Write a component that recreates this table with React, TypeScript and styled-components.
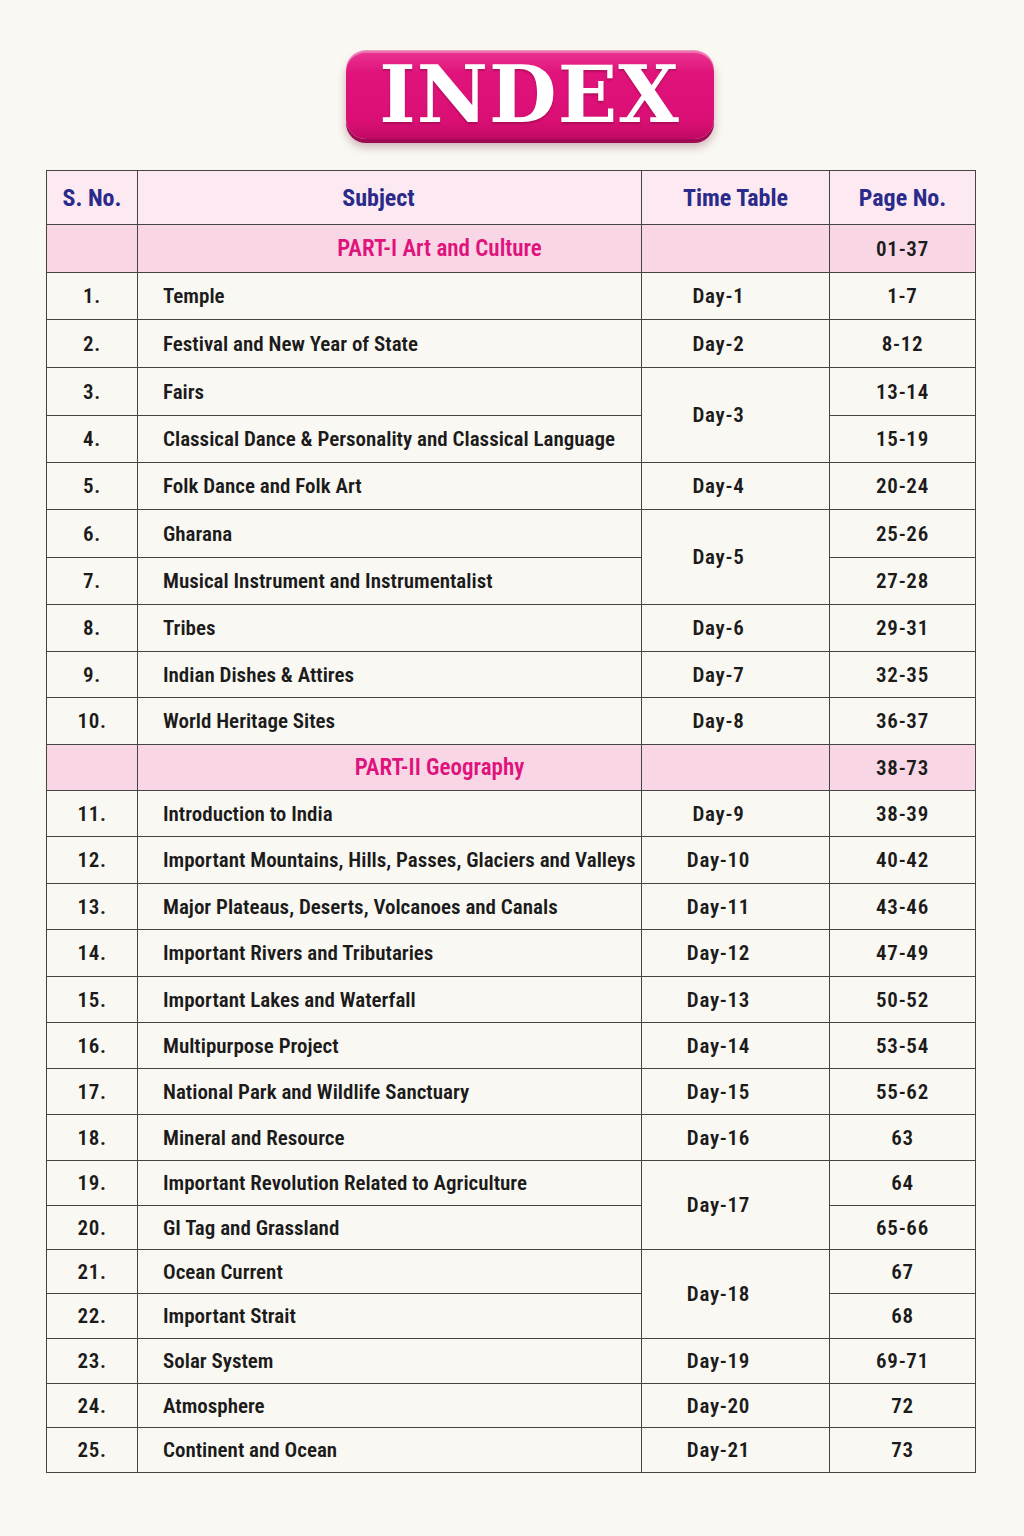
import React from "react";
import styled, { createGlobalStyle } from "styled-components";

const Global = createGlobalStyle`
  html, body { margin: 0; padding: 0; background: #faf8f2; }
  body { font-family: "Roboto Condensed", Roboto, "DejaVu Sans Condensed", sans-serif; font-stretch: 75%; }
`;

const Page = styled.div`
  width: 1024px;
  height: 1536px;
  background: #faf8f2;
  display: flex;
  flex-direction: column;
  align-items: stretch;
  box-sizing: border-box;
  padding: 50px 49px 0 46px;
`;

const BannerWrap = styled.div`
  display: flex;
  justify-content: center;
  padding-left: 38px;
  margin-bottom: 31px;
`;

const Banner = styled.div`
  width: 368px;
  height: 89px;
  box-sizing: border-box;
  border-radius: 20px;
  border-top: 1px solid rgba(255, 255, 255, 0.6);
  background: linear-gradient(180deg, #ea3590 0%, #e0137b 25%, #da0f74 80%, #c00a63 100%);
  box-shadow: 0 4px 0 #a10a52, 0 8px 10px rgba(90, 20, 50, 0.3), inset 0 2px 0 rgba(255, 255, 255, 0.3);
  display: flex;
  align-items: center;
  justify-content: center;
`;

const BannerText = styled.h1`
  margin: 0;
  font-family: "DejaVu Serif", "Liberation Serif", serif;
  font-stretch: 100%;
  font-weight: 700;
  font-size: 78px;
  line-height: 1;
  color: #ffffff;
  letter-spacing: 1px;
  text-shadow: 0 2px 2px rgba(100, 0, 40, 0.35);
`;

const Table = styled.table`
  width: 929px;
  border-collapse: collapse;
  table-layout: fixed;
  border: 1px solid #444;
`;

const Col = styled.col<{ $w: number }>`
  width: ${(p) => p.$w}px;
`;

const Row = styled.tr<{ $h: number; $bg?: string }>`
  height: ${(p) => p.$h}px;
  background: ${(p) => p.$bg || "transparent"};
`;

const Cell = styled.td<{
  $align?: string;
  $pl?: number;
  $pr?: number;
  $color?: string;
  $size?: number;
  $num?: boolean;
}>`
  border: 1px solid #444;
  padding: 0 ${(p) => p.$pr ?? 0}px 0 ${(p) => p.$pl ?? 0}px;
  text-align: ${(p) => p.$align || "center"};
  vertical-align: middle;
  color: ${(p) => p.$color || "#1b1b1b"};
  font-size: ${(p) => p.$size ?? 21}px;
  font-weight: 600;
  letter-spacing: ${(p) => (p.$num ? "0.7px" : "0")};
  white-space: nowrap;
  overflow: hidden;
`;

const HeadCell = styled.th<{ $pr?: number }>`
  border: 1px solid #444;
  padding: 0 ${(p) => p.$pr ?? 0}px 0 0;
  text-align: center;
  vertical-align: middle;
  color: #2a2a8a;
  font-size: 24px;
  font-weight: 700;
`;

type Item = {
  n: number;
  subject: string;
  day?: string;
  span?: number;
  page: string;
  h: number;
};

const part1: Item[] = [
  { n: 1, subject: "Temple", day: "Day-1", page: "1-7", h: 47 },
  { n: 2, subject: "Festival and New Year of State", day: "Day-2", page: "8-12", h: 48 },
  { n: 3, subject: "Fairs", day: "Day-3", span: 2, page: "13-14", h: 48 },
  { n: 4, subject: "Classical Dance & Personality and Classical Language", page: "15-19", h: 47 },
  { n: 5, subject: "Folk Dance and Folk Art", day: "Day-4", page: "20-24", h: 47 },
  { n: 6, subject: "Gharana", day: "Day-5", span: 2, page: "25-26", h: 48 },
  { n: 7, subject: "Musical Instrument and Instrumentalist", page: "27-28", h: 47 },
  { n: 8, subject: "Tribes", day: "Day-6", page: "29-31", h: 47 },
  { n: 9, subject: "Indian Dishes & Attires", day: "Day-7", page: "32-35", h: 46 },
  { n: 10, subject: "World Heritage Sites", day: "Day-8", page: "36-37", h: 47 },
];

const part2: Item[] = [
  { n: 11, subject: "Introduction to India", day: "Day-9", page: "38-39", h: 46 },
  { n: 12, subject: "Important Mountains, Hills, Passes, Glaciers and Valleys", day: "Day-10", page: "40-42", h: 47 },
  { n: 13, subject: "Major Plateaus, Deserts, Volcanoes and Canals", day: "Day-11", page: "43-46", h: 46 },
  { n: 14, subject: "Important Rivers and Tributaries", day: "Day-12", page: "47-49", h: 47 },
  { n: 15, subject: "Important Lakes and Waterfall", day: "Day-13", page: "50-52", h: 46 },
  { n: 16, subject: "Multipurpose Project", day: "Day-14", page: "53-54", h: 46 },
  { n: 17, subject: "National Park and Wildlife Sanctuary", day: "Day-15", page: "55-62", h: 46 },
  { n: 18, subject: "Mineral and Resource", day: "Day-16", page: "63", h: 46 },
  { n: 19, subject: "Important Revolution Related to Agriculture", day: "Day-17", span: 2, page: "64", h: 45 },
  { n: 20, subject: "GI Tag and Grassland", page: "65-66", h: 44 },
  { n: 21, subject: "Ocean Current", day: "Day-18", span: 2, page: "67", h: 44 },
  { n: 22, subject: "Important Strait", page: "68", h: 45 },
  { n: 23, subject: "Solar System", day: "Day-19", page: "69-71", h: 45 },
  { n: 24, subject: "Atmosphere", day: "Day-20", page: "72", h: 44 },
  { n: 25, subject: "Continent and Ocean", day: "Day-21", page: "73", h: 45 },
];

const PART_BG = "#f8d6e5";
const HEAD_BG = "#fce9f1";

function PartRow({ title, pages, h }: { title: string; pages: string; h: number }) {
  return (
    <Row $h={h} $bg={PART_BG}>
      <Cell />
      <Cell $pl={100} $color="#e0127b" $size={23}>
        {title}
      </Cell>
      <Cell />
      <Cell $num>{pages}</Cell>
    </Row>
  );
}

function ItemRow({ item }: { item: Item }) {
  return (
    <Row $h={item.h}>
      <Cell $num>{item.n}.</Cell>
      <Cell $align="left" $pl={25}>
        {item.subject}
      </Cell>
      {item.day && (
        <Cell rowSpan={item.span || 1} $pr={34} $num>
          {item.day}
        </Cell>
      )}
      <Cell $num>{item.page}</Cell>
    </Row>
  );
}

export default function App() {
  return (
    <>
      <Global />
      <Page>
        <BannerWrap>
          <Banner>
            <BannerText>INDEX</BannerText>
          </Banner>
        </BannerWrap>
        <Table>
          <colgroup>
            <Col $w={91} />
            <Col $w={504} />
            <Col $w={188} />
            <Col $w={146} />
          </colgroup>
          <thead>
            <Row $h={54} $bg={HEAD_BG}>
              <HeadCell>S. No.</HeadCell>
              <HeadCell $pr={22}>Subject</HeadCell>
              <HeadCell>Time Table</HeadCell>
              <HeadCell>Page No.</HeadCell>
            </Row>
          </thead>
          <tbody>
            <PartRow title="PART-I Art and Culture" pages="01-37" h={48} />
            {part1.map((it) => (
              <ItemRow key={it.n} item={it} />
            ))}
            <PartRow title="PART-II Geography" pages="38-73" h={46} />
            {part2.map((it) => (
              <ItemRow key={it.n} item={it} />
            ))}
          </tbody>
        </Table>
      </Page>
    </>
  );
}
